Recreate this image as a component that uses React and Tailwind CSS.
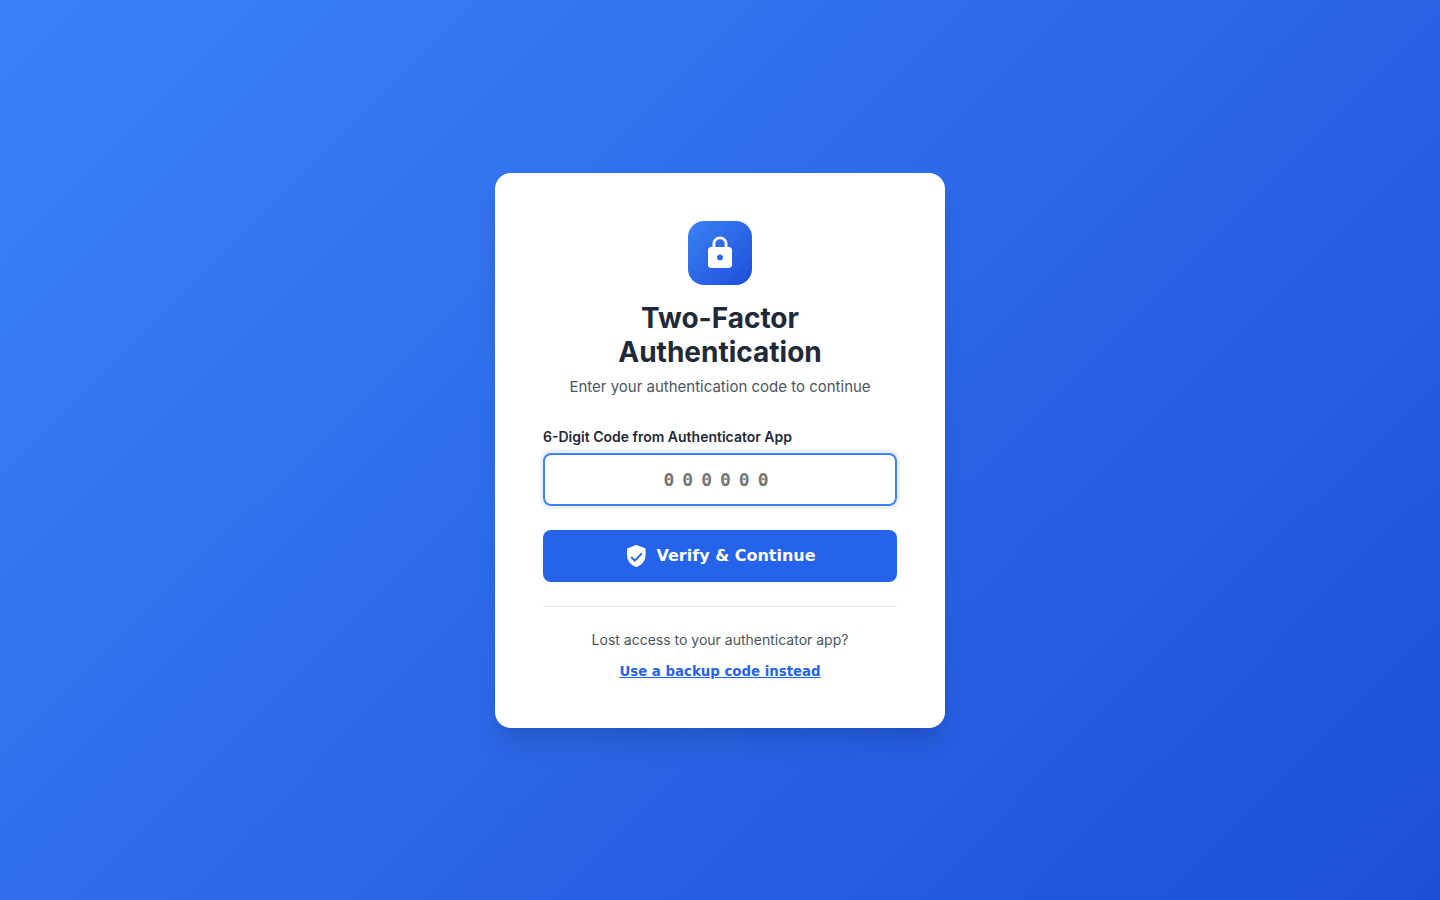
import React from 'react';
import { MdLock } from 'react-icons/md';

export default function App() {
    return (
        <div className="min-h-screen flex items-center justify-center bg-[linear-gradient(135deg,#3b82f6,#1d4ed8)] font-['Inter',sans-serif]">
            <div className="w-[450px] bg-white rounded-2xl p-12 shadow-[0_20px_25px_-5px_rgba(0,0,0,0.1),0_10px_10px_-5px_rgba(0,0,0,0.04)]">
                {/* Header */}
                <div className="flex flex-col items-center text-center mb-[31px]">
                    <div className="w-16 h-16 rounded-2xl bg-[linear-gradient(135deg,#3b82f6,#1d4ed8)] flex items-center justify-center mb-4 text-white">
                        <MdLock size={36} />
                    </div>
                    <h1 className="text-[28px] leading-[34px] font-bold text-[#1f2937] mb-2">Two-Factor Authentication</h1>
                    <p className="text-[15px] leading-5 text-[#4b5563]">Enter your authentication code to continue</p>
                </div>

                {/* Form */}
                <label className="block text-sm font-semibold leading-[17px] text-[#1f2937] mb-2">6-Digit Code from Authenticator App</label>
                <input
                    type="text"
                    placeholder="000000"
                    className="block w-full h-[53px] rounded-lg border-2 border-[#3b82f6] ring-[3px] ring-[#3b82f6]/10 text-center font-['DejaVu_Sans_Mono',monospace] font-semibold text-lg tracking-[8px] outline-none placeholder:text-[#757575] mb-6"
                />
                <button className="w-full h-[52px] rounded-lg bg-[#2563eb] text-white flex items-center justify-center gap-2 font-['DejaVu_Sans',sans-serif] font-semibold text-base">
                    <svg width="24" height="24" viewBox="0 0 24 24">
                        <path d="M12.3 2 4 5.3V11c0 5 3.4 9.6 8.3 11 4.9-1.4 8.3-6 8.3-11V5.3z" fill="#fff" stroke="#fff" strokeWidth="2" strokeLinejoin="round" />
                        <path d="M7.2 13l3.6 3.6 7-7.2" fill="none" stroke="#2563eb" strokeWidth="2" />
                    </svg>
                    <span>Verify &amp; Continue</span>
                </button>

                {/* Backup */}
                <div className="mt-6 pt-6 border-t border-[#e5e7eb] text-center">
                    <p className="text-sm leading-[17px] text-[#4b5563] mb-[15px]">Lost access to your authenticator app?</p>
                    <a href="#" className="block font-['DejaVu_Sans',sans-serif] text-[13.333px] leading-[17px] font-semibold text-[#2563eb] underline">Use a backup code instead</a>
                </div>
            </div>
        </div>
    );
}
